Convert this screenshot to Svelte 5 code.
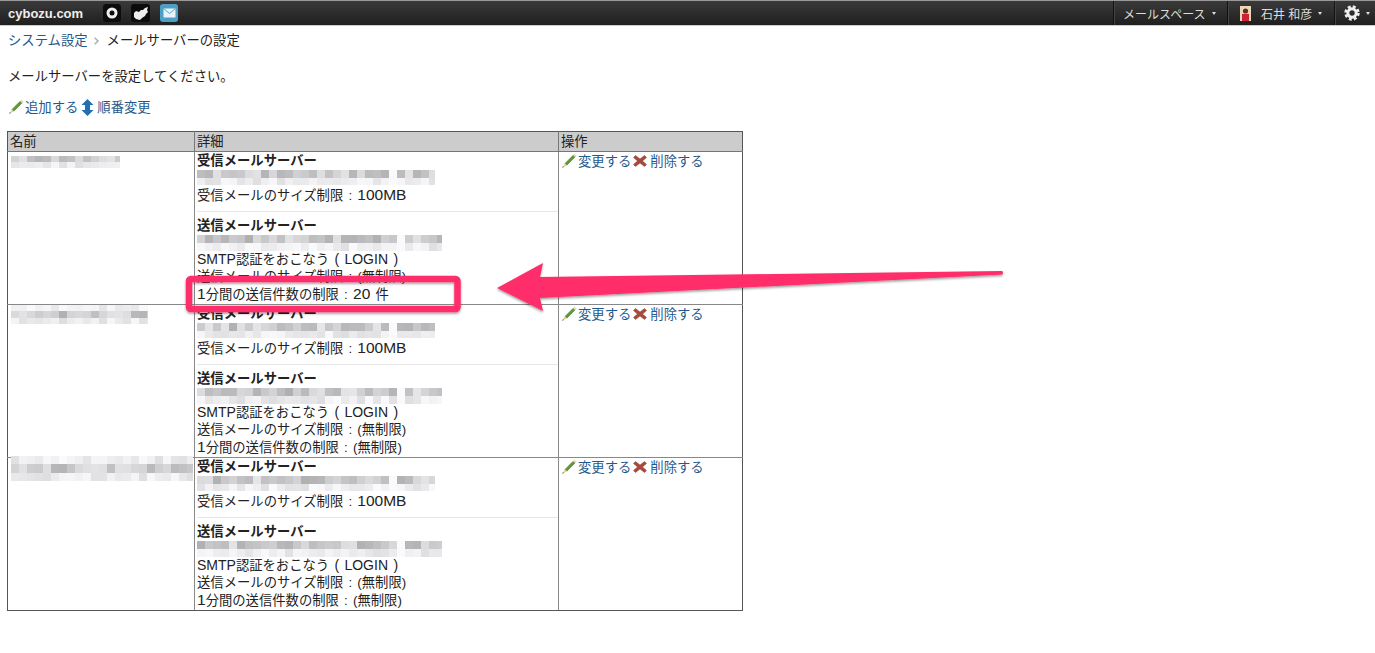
<script lang="ts">
    // pixelated blocks standing in for the blurred host names
    function mosaic(w: number, h: number, seed: number, gap = -1) {
        const cells = [];
        let s = seed;
        const rows = h > 17 ? 3 : 2;
        const rh = h / rows;
        for (let r = 0; r < rows; r++) {
            const dark = rows === 3 ? r === 1 : r === 0;
            for (let x = 0; x < w; x += 8) {
                s = (s * 9301 + 49297) % 233280;
                const rnd = s / 233280;
                const inGap = gap >= 0 && x >= gap && x < gap + 8;
                const v = inGap ? 250 : Math.round((dark ? 176 : 222) + rnd * (dark ? 54 : 28));
                cells.push({ x, y: r * rh, w: 8, h: rh, fill: `rgb(${v},${v},${v + 2})` });
            }
        }
        return cells;
    }

    const rows = [
        { name: { w: 109, h: 12, top: 3, seed: 11 }, count: 20 },
        { name: { w: 137, h: 19, top: -1, seed: 37 }, count: 0 },
        { name: { w: 182, h: 25, top: -3, seed: 73 }, count: 0 }
    ];
</script>

{#snippet blur(w, h, seed, gap = -1)}
    <svg class="blur" width={w} height={h} viewBox="0 0 {w} {h}" shape-rendering="crispEdges">
        {#each mosaic(w, h, seed, gap) as c}
            <rect x={c.x} y={c.y} width={c.w} height={c.h} fill={c.fill} />
        {/each}
    </svg>
{/snippet}

{#snippet pencil()}
    <svg class="icon pencil" width="16" height="16" viewBox="0 0 16 16">
        <path d="M4 10.4 L12.2 2.2 L14 4 L5.8 12.2 Z" fill="#5d9a35" stroke="#3f6d22" stroke-width=".5" />
        <path d="M12.2 2.2 L13.4 1 L15.2 2.8 L14 4 Z" fill="#efe3bd" stroke="#b8a878" stroke-width=".4" />
        <path d="M4 10.4 L5.8 12.2 L1.2 14.8 Z" fill="#e4c88c" />
        <path d="M2 13.2 L2.9 14.1 L1.2 14.8 Z" fill="#333" />
    </svg>
{/snippet}

{#snippet cross()}
    <svg class="icon cross" width="16" height="16" viewBox="0 0 16 16">
        <path d="M3.5 2.5 L8 6 L12.5 2.5 L14.5 4.5 L10.5 8 L14.5 11.5 L12.5 13.5 L8 10 L3.5 13.5 L1.5 11.5 L5.5 8 L1.5 4.5 Z" fill="#a8493c" stroke="#8a3a2f" stroke-width=".5" />
    </svg>
{/snippet}

<div class="topbar">
    <div class="left">
        <span class="logo">cybozu.com</span>
        <span class="app dark">
            <svg width="12" height="12" viewBox="0 0 12 12"><circle cx="6" cy="6" r="4" fill="none" stroke="#eee" stroke-width="3" /></svg>
        </span>
        <span class="app dark wide">
            <svg width="16" height="13" viewBox="0 0 16 13"><path d="M1 6 L3 4 L6 5 L8 3 L10 3 L12 1 L15 0 L14 3 L15 5 L13 7 L12 9 L9 11 L7 13 L3 12 L1 10 Z" fill="#eee" /></svg>
        </span>
        <span class="app mail">
            <svg width="13" height="10" viewBox="0 0 13 10"><rect x=".5" y=".5" width="12" height="9" fill="#e8f4f8" /><path d="M.5 .5 L6.5 5.5 L12.5 .5" fill="none" stroke="#5aa5c4" /></svg>
        </span>
    </div>
    <div class="right">
        <div class="menu space">メールスペース<i class="caret"></i></div>
        <div class="menu user">
            <svg class="avatar" width="11" height="15" viewBox="0 0 11 15">
                <rect width="11" height="15" fill="#e8d8b8" />
                <circle cx="5.5" cy="5" r="2.6" fill="#6a2a20" />
                <rect x="2" y="8" width="7" height="7" fill="#cc2233" />
            </svg>
            石井 和彦<i class="caret"></i>
        </div>
        <div class="menu gear">
            <svg width="16" height="16" viewBox="0 0 16 16">
                <circle cx="8" cy="8" r="4.2" fill="none" stroke="#eee" stroke-width="3" />
                <circle cx="8" cy="8" r="6.4" fill="none" stroke="#eee" stroke-width="2.6" stroke-dasharray="2.9 2.13" />
            </svg>
            <i class="caret"></i>
        </div>
    </div>
</div>

<main>
    <nav class="crumb">
        <a href="#top">システム設定</a>
        <svg class="chev" width="5" height="8" viewBox="0 0 5 8"><path d="M.7 .7 L4 4 L.7 7.3" fill="none" stroke="#aaa" stroke-width="1.4" /></svg>
        <span>メールサーバーの設定</span>
    </nav>
    <p class="lead">メールサーバーを設定してください。</p>
    <div class="actions">
        {@render pencil()}<a href="#top">追加する</a>
        <svg class="updown" width="13" height="17" viewBox="0 0 13 17">
            <path d="M6.5 0 L12.5 6 L9 6 L9 11 L12.5 11 L6.5 17 L.5 11 L4 11 L4 6 L.5 6 Z" fill="#1f6fb2" />
        </svg><a href="#top">順番変更</a>
    </div>

    <table>
        <thead>
            <tr><th class="c1">名前</th><th class="c2">詳細</th><th class="c3">操作</th></tr>
        </thead>
        <tbody>
            {#each rows as row, i}
                <tr>
                    <td>
                        <div class="name" style="margin-top: {row.name.top}px">
                            {@render blur(row.name.w, row.name.h, row.name.seed)}
                        </div>
                    </td>
                    <td>
                        <div class="block">
                            <b class="first">受信メールサーバー</b>
                            <div class="host in">{@render blur(238, 15, 101 + i * 7, 192)}</div>
                            <div class="line">受信メールのサイズ制限 : <span class="num">100MB</span></div>
                        </div>
                        <div class="block last">
                            <b>送信メールサーバー</b>
                            <div class="host">{@render blur(245, 16, 211 + i * 5, 200)}</div>
                            <div class="line"><span class="lat">SMTP</span>認証をおこなう <span class="lat">( LOGIN )</span></div>
                            <div class="line">送信メールのサイズ制限 : (無制限)</div>
                            <div class="line">
                                <span class="num">1</span>分間の送信件数の制限 :
                                {#if row.count}<span class="num">{row.count}</span> 件{:else}(無制限){/if}
                            </div>
                        </div>
                    </td>
                    <td class="ops">
                        {@render pencil()}<a href="#top">変更する</a>{@render cross()}<a class="del" href="#top">削除する</a>
                    </td>
                </tr>
            {/each}
        </tbody>
    </table>
</main>

<!-- screenshot annotation drawn on top of the page -->
<svg class="mark" width="1375" height="653" viewBox="0 0 1375 653">
    <defs>
        <filter id="sh" x="-5%" y="-20%" width="110%" height="150%">
            <feDropShadow dx="0" dy="1.5" stdDeviation="1.2" flood-color="#000" flood-opacity=".4" />
        </filter>
    </defs>
    <rect x="189" y="279" width="268.5" height="30" rx="2" fill="none" stroke="#ff2d6b" stroke-width="6.5" filter="url(#sh)" />
    <path d="M497 288 L543 263 L540 277 L1002 271 Q1004 272.5 1002 274.5 L540 298 L543 311 Z" fill="#ff2d6b" filter="url(#sh)" />
</svg>

<style>
    :global(body) {
        margin: 0;
        background: #fff;
    }
    .topbar {
        height: 24px;
        display: flex;
        justify-content: space-between;
        background: linear-gradient(#3a3a3a, #1f1f1f);
        border-top: 1px solid #999;
        border-bottom: 1px solid #ccc;
        font-family: "Liberation Sans", "Noto Sans CJK JP", sans-serif;
        color: #ddd;
    }
    .left {
        display: flex;
        align-items: center;
        padding-left: 8px;
    }
    .logo {
        font-size: 13px;
        font-weight: bold;
        color: #eee;
        width: 95px;
    }
    .app {
        width: 18px;
        height: 18px;
        margin-right: 10px;
        border-radius: 3px;
        display: flex;
        align-items: center;
        justify-content: center;
    }
    .wide {
        width: 19px;
        margin-right: 10px;
    }
    .dark {
        background: #0c0c0c;
    }
    .mail {
        background: #4da0c4;
    }
    .right {
        display: flex;
    }
    .menu {
        display: flex;
        align-items: center;
        font-size: 12px;
        border-left: 1px solid #111;
        box-shadow: inset 1px 0 0 #444;
        box-sizing: border-box;
    }
    .space {
        width: 114px;
        padding-left: 9px;
    }
    .user {
        width: 107px;
        padding-left: 12px;
    }
    .gear {
        width: 41px;
        padding-left: 9px;
    }
    .avatar {
        margin-right: 10px;
    }
    .caret {
        width: 0;
        height: 0;
        margin-left: 6px;
        border-left: 2.5px solid transparent;
        border-right: 2.5px solid transparent;
        border-top: 3px solid #ddd;
    }
    main {
        padding: 6px 0 0 7px;
        font-family: "Liberation Sans", "Noto Sans CJK JP", sans-serif;
        font-size: 13.33px;
        line-height: 17px;
        color: #222;
    }
    a {
        color: #1f5a8e;
        text-decoration: none;
    }
    .crumb {
        padding-left: 1px;
        display: flex;
        align-items: center;
    }
    .chev {
        margin: 0 8px 0 6px;
    }
    .lead {
        margin: 19px 0 0 1px;
    }
    .actions {
        margin: 13px 0 0 1px;
        height: 18px;
        display: flex;
        align-items: center;
    }
    .icon {
        flex: none;
        vertical-align: -3px;
    }
    .pencil {
        margin-right: 1px;
    }
    .cross {
        margin-left: 1px;
    }
    .updown {
        flex: none;
        margin: 1px 3px 0;
    }
    table {
        margin-top: 15px;
        width: 736px;
        table-layout: fixed;
        border-collapse: collapse;
        border: 1px solid #555;
    }
    th, td {
        border: 1px solid #888;
        padding: 1px 2px 0;
        vertical-align: top;
        text-align: left;
        font-weight: normal;
    }
    th {
        background: #ccc;
        height: 18px;
        border-color: #777;
        border-top-color: #555;
    }
    tr > :first-child {
        border-left-color: #555;
    }
    tr > :last-child {
        border-right-color: #555;
    }
    tbody tr:last-child td {
        border-bottom-color: #555;
    }
    .c1 {
        width: 182px;
    }
    .c2 {
        width: 359px;
    }
    .name {
        height: 0;
        padding-left: 1px;
        position: relative;
        z-index: 1;
    }
    .blur {
        display: block;
    }
    .first {
        display: block;
        line-height: 16px;
    }
    .block {
        height: 51px;
        padding-bottom: 7px;
        border-bottom: 1px solid #e6e6e6;
        margin-right: -2px;
        margin-bottom: 5px;
    }
    .block.last {
        height: 87px;
        padding-bottom: 0;
        border-bottom: 0;
        margin-bottom: 0;
    }
    .host {
        height: 17px;
        display: flex;
        align-items: center;
    }
    .line {
        word-spacing: 1.5px;
    }
    .num {
        font-size: 15.5px;
    }
    .lat {
        font-size: 14px;
    }
    .del {
        margin-left: 2px;
    }
    .mark {
        position: absolute;
        left: 0;
        top: 0;
        pointer-events: none;
    }
</style>
